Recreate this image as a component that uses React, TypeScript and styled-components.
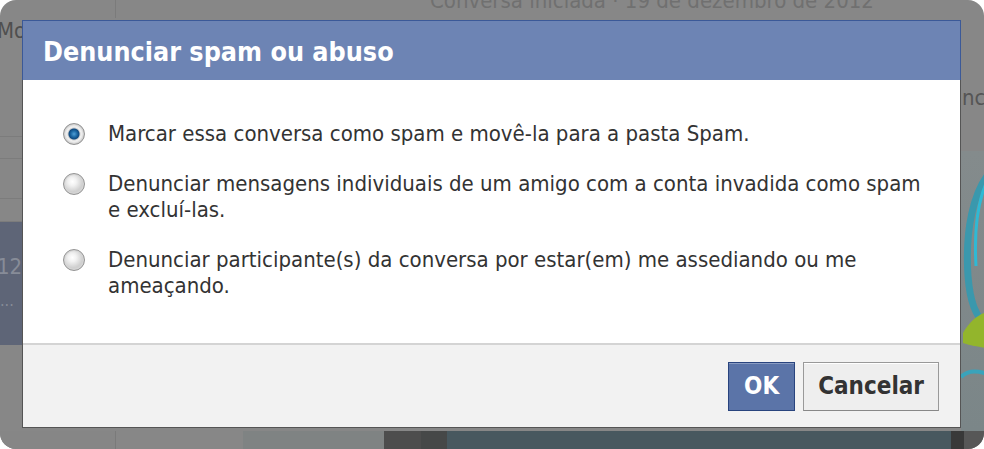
import React from 'react';
import styled, { createGlobalStyle } from 'styled-components';

const GlobalStyle = createGlobalStyle`
  html,
  body {
    margin: 0;
    background: #ffffff;
  }

  body {
    width: 984px;
    height: 449px;
    overflow: hidden;
  }
`;

const FONT = `Tahoma, 'DejaVu Sans Condensed', 'DejaVu Sans', sans-serif`;

const options = [
  'Marcar essa conversa como spam e movê-la para a pasta Spam.',
  'Denunciar mensagens individuais de um amigo com a conta invadida como spam e excluí-las.',
  'Denunciar participante(s) da conversa por estar(em) me assediando ou me ameaçando.',
];

// rows of the inbox list that peek out left of the dialog
const listRows = [21, 39, 22];

const bottomBlocks = [
  { width: 115, color: '#868686', line: true },
  { width: 127, color: '#878787', line: false },
  { width: 141, color: '#7f8383', line: false },
  { width: 37, color: '#4d4d4d', line: false },
  { width: 26, color: '#464848', line: false },
  { width: 505, color: '#48585f', line: false },
  { width: 13, color: '#393939', line: false },
  { width: 20, color: '#575757', line: false },
];

const App: React.FC = () => {
  return (
    <>
      <GlobalStyle />
      <Frame>
        <BackPage aria-hidden="true">
          <TopRow>
            <TopLeft />
            <TopText>Conversa iniciada · 19 de dezembro de 2012</TopText>
          </TopRow>
          <MiddleRow>
            <LeftStrip>
              <ListRow $height={118}>
                <PeekText>Mo</PeekText>
              </ListRow>
              {listRows.map((h, i) => (
                <ListRow key={i} $height={h} />
              ))}
              <ThreadBlock>
                <ThreadNum>12</ThreadNum>
                <ThreadDots>...</ThreadDots>
              </ThreadBlock>
            </LeftStrip>
            <RightStrip>
              <SideText>nc</SideText>
              <ArtPanel>
                <svg width="23" height="275" viewBox="0 0 23 275">
                  <path
                    d="M30 20 C 12 40, 4 80, 7 125 C 9 150, 14 165, 26 175"
                    fill="none"
                    stroke="#3a98ad"
                    strokeWidth="7"
                  />
                  <path
                    d="M26 30 C 17 50, 13 80, 15 115"
                    fill="none"
                    stroke="#2fb9d4"
                    strokeWidth="3"
                  />
                  <path d="M2 182 C 10 168, 20 162, 30 160 L 30 198 C 18 196, 8 194, 2 192 Z" fill="#93b52c" />
                  <path
                    d="M0 226 C 8 218, 18 220, 30 224"
                    fill="none"
                    stroke="#3aa3bb"
                    strokeWidth="4"
                  />
                </svg>
              </ArtPanel>
            </RightStrip>
          </MiddleRow>
          <BottomRow>
            {bottomBlocks.map((block, i) => (
              <BottomBlock key={i} $width={block.width} $color={block.color} $line={block.line} />
            ))}
          </BottomRow>
        </BackPage>

        <Dialog role="dialog" aria-labelledby="dialog-title">
          <Header>
            <Title id="dialog-title">Denunciar spam ou abuso</Title>
          </Header>
          <Content>
            <Body>
              {options.map((text, i) => (
                <Option key={i}>
                  <Radio type="radio" name="report" defaultChecked={i === 0} />
                  <OptionText>{text}</OptionText>
                </Option>
              ))}
            </Body>
            <Footer>
              <Button $primary>OK</Button>
              <Button>Cancelar</Button>
            </Footer>
          </Content>
        </Dialog>
      </Frame>
    </>
  );
};

const Frame = styled.div`
  position: relative;
  width: 984px;
  height: 449px;
  border-radius: 16px;
  overflow: hidden;
  background: #878787;
`;

const BackPage = styled.div`
  display: flex;
  flex-direction: column;
  height: 100%;
  font-family: ${FONT};
  font-size: 22px;
`;

const TopRow = styled.div`
  display: flex;
  height: 20px;
  overflow: hidden;
`;

const TopLeft = styled.div`
  width: 115px;
  border-right: 1px solid #7b7b7b;
`;

const TopText = styled.div`
  margin: -12px 0 0 314px;
  color: #707070;
  white-space: nowrap;
  line-height: 26px;
`;

const MiddleRow = styled.div`
  flex: 1;
  display: flex;
  justify-content: space-between;
`;

const LeftStrip = styled.div`
  width: 22px;
  display: flex;
  flex-direction: column;
  overflow: hidden;
`;

const ListRow = styled.div<{ $height: number }>`
  height: ${(p) => p.$height}px;
  flex-shrink: 0;
  border-bottom: 1px solid #7c7c7c;
`;

const PeekText = styled.div`
  margin-left: -3px;
  color: #4f4f4f;
  line-height: 26px;
  white-space: nowrap;
`;

const ThreadBlock = styled.div`
  display: flex;
  flex-direction: column;
  flex-shrink: 0;
  height: 123px;
  padding-top: 32px;
  box-sizing: border-box;
  background: #5e6577;
  color: #878c98;
`;

const ThreadNum = styled.span`
  line-height: 26px;
  margin-left: -3px;
`;

const ThreadDots = styled.span`
  line-height: 26px;
  margin-top: 8px;
  font-size: 16px;
`;

const RightStrip = styled.div`
  width: 23px;
  display: flex;
  flex-direction: column;
  overflow: hidden;
`;

const SideText = styled.div`
  margin: 67px 0 0 1px;
  color: #555555;
  line-height: 26px;
  white-space: nowrap;
`;

const ArtPanel = styled.div`
  margin-top: 40px;
  flex: 1;
  background: linear-gradient(180deg, #848b8c, #7b8688);
  overflow: hidden;
`;

const BottomRow = styled.div`
  display: flex;
  height: 21px;
`;

const BottomBlock = styled.div<{ $width: number; $color: string; $line: boolean }>`
  width: ${(p) => p.$width}px;
  background: ${(p) => p.$color};
  border-right: ${(p) => (p.$line ? '1px solid #7a7a7a' : 'none')};
`;

const Dialog = styled.section`
  position: absolute;
  left: 22px;
  top: 20px;
  width: 939px;
  height: 408px;
  display: flex;
  flex-direction: column;
  font-family: ${FONT};
`;

const Header = styled.header`
  height: 57px;
  border: 1px solid #3b5998;
  border-bottom: none;
  background: #6d84b4;
  display: flex;
  align-items: center;
  padding: 2px 20px 0;
`;

const Title = styled.h2`
  margin: 0;
  color: #ffffff;
  font-size: 26.7px;
  font-weight: bold;
  line-height: 30px;
`;

const Content = styled.div`
  flex: 1;
  display: flex;
  flex-direction: column;
  border: 1px solid #555555;
  border-top: none;
  background: #ffffff;
`;

const Body = styled.div`
  height: 263px;
  box-sizing: border-box;
  padding: 41px 20px 0 40px;
  display: flex;
  flex-direction: column;
  gap: 24px;
`;

const Option = styled.label`
  display: flex;
  align-items: flex-start;
  gap: 23px;
`;

const Radio = styled.input`
  appearance: none;
  flex-shrink: 0;
  width: 22px;
  height: 22px;
  margin: 2px 0 0;
  border-radius: 50%;
  border: 1px solid #939393;
  box-sizing: border-box;
  box-shadow: inset 0 0 0 1px #d6d6d6;
  background: radial-gradient(circle at 42% 38%, #ffffff 0, #f2f2f2 4px, #d0d0d0 10px);

  &:checked {
    background: radial-gradient(
      circle at 50% 50%,
      #4f9fd6 0,
      #1d6aa6 3px,
      #0f4a80 5px,
      #cfcfcf 6px,
      #f2f2f2 7px,
      #e2e2e2 9px,
      #bdbdbd 10px
    );
  }
`;

const OptionText = styled.span`
  max-width: 828px;
  color: #333333;
  font-size: 22px;
  line-height: 26px;
`;

const Footer = styled.footer`
  flex: 1;
  display: flex;
  align-items: center;
  justify-content: flex-end;
  gap: 8px;
  padding: 0 21px 0 0;
  border-top: 2px solid #d4d4d4;
  background: #f2f2f2;
`;

const Button = styled.button<{ $primary?: boolean }>`
  height: 49px;
  padding: 0 ${(p) => (p.$primary ? '15px' : '14px')};
  font-family: ${FONT};
  font-size: 24px;
  font-weight: bold;
  border: 1px solid ${(p) => (p.$primary ? '#29447e' : '#999999')};
  border-bottom-color: ${(p) => (p.$primary ? '#29447e' : '#888888')};
  background: ${(p) => (p.$primary ? '#5b74a8' : '#eeeeee')};
  color: ${(p) => (p.$primary ? '#ffffff' : '#333333')};
  box-shadow: inset 0 1px 0 ${(p) => (p.$primary ? '#8a9cc2' : '#ffffff')};
  cursor: pointer;
`;

export default App;
